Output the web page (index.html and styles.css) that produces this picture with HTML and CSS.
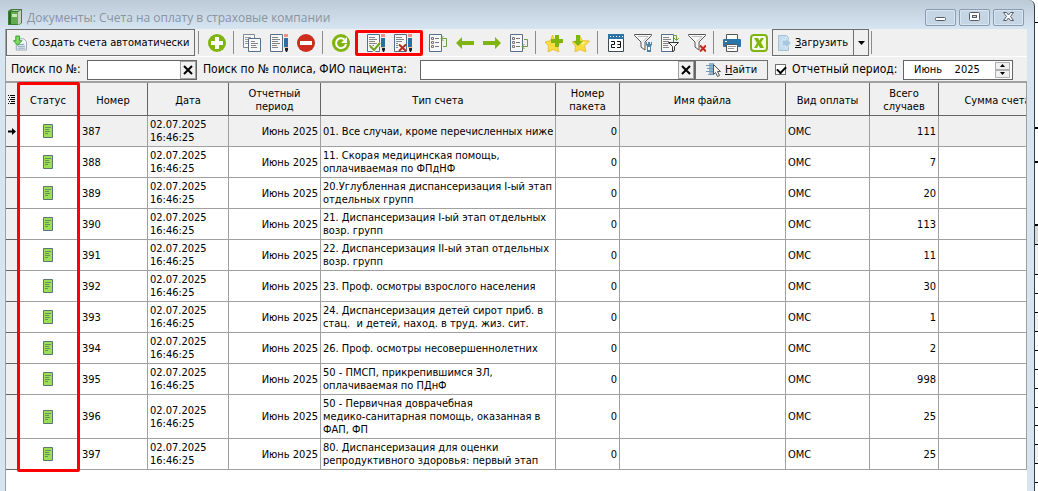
FILE: index.html
```html
<!DOCTYPE html>
<html lang="ru">
<head>
    <meta charset="UTF-8">
    <meta name="viewport" content="width=device-width, initial-scale=1.0">
    <title>Документы: Счета на оплату в страховые компании</title>
    <link rel="stylesheet" href="styles.css">
</head>
<body>
    <svg class="sprite" aria-hidden="true">
        <symbol id="page" viewBox="0 0 10 14">
            <path d="M.5.5h9v13h-9z" fill="#9be052" stroke="#5c7378"/>
            <path d="M2 3.500h6M2 5.500h4M2 7.500h5M2 9.500h3" stroke="#6d8a60"/>
        </symbol>
        <symbol id="sheet" viewBox="0 0 18 18">
            <path d="M.5.5h12v17H.5z" fill="#f8f8f8" stroke="#54708a"/>
            <path d="M2 3.500h6M2 5.500h8M2 7.500h6M2 9.500h8M2 11.500h5M2 13.500h6" stroke="#858585"/>
        </symbol>
        <symbol id="pencil" viewBox="0 0 5 18">
            <path d="M1 0h4v3H1z" fill="#f09084"/>
            <path d="M1 4h4v9H1z" fill="#2b6fa3"/>
            <path d="M1 13h4v1H1z" fill="#e8c48c"/>
            <path d="M2 14h3v2l-1 2H3l-1-2z" fill="#1e1e28"/>
        </symbol>
        <symbol id="funnel" viewBox="0 0 18 18">
            <path d="M.5.5h17v1L11 8v8l-4-3V8L.5 1.500z" fill="#f7f7f7" stroke="#555"/>
            <path d="M4 2.500h10l-5 5" fill="none" stroke="#bbb"/>
        </symbol>
        <symbol id="star" viewBox="0 0 18 18">
            <path d="M7.500 1l2.500 5.500 7.500.5-5 5 1.500 6-6-2.500L3 18l.5-6L0 8l5.500-1.500z" fill="#fbdc3e" stroke="#e5b92b" stroke-width=".8"/>
            <path d="M7.500 3L9 7.500l5 .5-4 3" fill="#fff08c"/>
        </symbol>
        <symbol id="tree" viewBox="0 0 18 18">
            <path d="M.5.5h12v17H.5z" fill="#f8f8f8" stroke="#54708a"/>
            <path d="M2.500 3.500h2v2h-2zM2.500 7.500h2v2h-2zM2.500 11.500h2v2h-2z" fill="none" stroke="#777"/>
            <path d="M6 4.500h4M6 8.500h4M6 12.500h4" stroke="#777"/>
        </symbol>
    </svg>

    <div class="window">
        <header class="titlebar">
            <svg class="book" viewBox="0 0 14 16"><path d="M0 2l3-2h11v14l-3 2H0z" fill="#3c7d35"/><path d="M1 3h9v12H1z" fill="#62ac50"/><path d="M10 3l3-2v13l-3 2z" fill="#c5d4c2"/><path d="M1 3h2v12H1z" fill="#2c6929"/><path d="M4 5h5v3H4z" fill="#c8e6b8"/><path d="M3 2l2-1h7l-2 1z" fill="#a5cf98"/></svg>
            <h1>Документы: Счета на оплату в страховые компании</h1>
            <div class="window-buttons">
                <button aria-label="Свернуть"><svg viewBox="0 0 11 10"><rect x=".5" y="5.500" width="10" height="3" rx="1" fill="#fff" stroke="#525c69"/></svg></button>
                <button aria-label="Развернуть"><svg viewBox="0 0 11 10"><rect x=".5" y=".5" width="10" height="8" rx="1" fill="#fff" stroke="#525c69"/><rect x="3.500" y="3.500" width="4" height="2" fill="#cbd9e8" stroke="#525c69"/></svg></button>
                <button aria-label="Закрыть"><svg viewBox="0 0 11 10"><path d="M.5.5h3l2 2.500 2-2.500h3L7.500 4.500l3 4h-3l-2-2.500-2 2.500h-3l3-4z" fill="#fff" stroke="#525c69"/></svg></button>
            </div>
        </header>

        <main class="content">
            <div class="toolbar">
                <button class="btn create">
                    <svg viewBox="0 0 15 16"><path d="M3.500 3.500h8l3 3v9h-11z" fill="#f3f7fb" stroke="#8ea2b5"/><path d="M5 9.500h7M5 11.500h8M5 13.500h8" stroke="#7b98b3"/><path d="M3 .5h4v5h2.500L5 10.500.5 5.500H3z" fill="#7bdc62" stroke="#3a9a32"/></svg>
                    Создать счета автоматически
                </button>
                <i class="sep"></i>
                <button class="tool" aria-label="Добавить"><svg viewBox="0 0 18 18"><circle cx="9" cy="9" r="9" fill="#80b50f"/><path d="M7 3h4v4h4v4h-4v4H7v-4H3V7h4z" fill="#fff"/></svg></button>
                <i class="sep"></i>
                <button class="tool" aria-label="Копировать"><svg viewBox="0 0 18 18"><path d="M.5.5h11v13H.5z" fill="#f8f8f8" stroke="#7a8a96"/><path d="M2 3.500h6M2 5.500h3M2 7.500h3M2 9.500h3" stroke="#999"/><path d="M5.500 4.500h12v13h-12z" fill="#f8f8f8" stroke="#54708a"/><path d="M8 7.500h4M8 9.500h7M8 11.500h5M8 13.500h6" stroke="#858585"/></svg></button>
                <button class="tool" aria-label="Изменить"><svg viewBox="0 0 18 18"><use href="#sheet" width="18" height="18"/><use href="#pencil" x="13" width="5" height="18"/></svg></button>
                <button class="tool" aria-label="Удалить"><svg viewBox="0 0 18 18"><circle cx="9" cy="9" r="9" fill="#cc2d1c"/><path d="M3 7h12v4H3z" fill="#fff"/></svg></button>
                <i class="sep"></i>
                <button class="tool" aria-label="Обновить"><svg viewBox="0 0 18 18"><circle cx="9" cy="9" r="9" fill="#80b50f"/><path d="M12.500 5.500A5 5 0 1 0 14 10" fill="none" stroke="#fff" stroke-width="2"/><path d="M15 3v6H9z" fill="#fff"/></svg></button>
                <div class="marked-tools">
                    <button class="tool" aria-label="Подтвердить"><svg viewBox="0 0 18 18"><use href="#sheet" width="18" height="18"/><path d="M3 12l4 4 6-7" fill="none" stroke="#f8f8f8" stroke-width="4"/><path d="M3 12l4 4 6-7" fill="none" stroke="#69a61f" stroke-width="2"/><use href="#pencil" x="13" width="5" height="18"/></svg></button>
                    <button class="tool" aria-label="Отклонить"><svg viewBox="0 0 18 18"><use href="#sheet" width="18" height="18"/><path d="M4 9h8v8H4z" fill="#f8f8f8"/><path d="M5 10.500l7 6.500M12 10.500L5 17" stroke="#b52c20" stroke-width="2"/><use href="#pencil" x="13" width="5" height="18"/></svg></button>
                    <i class="mark"></i>
                </div>
                <button class="tool" aria-label="Исключить"><svg viewBox="0 0 18 18"><use href="#tree" width="18" height="18"/><path d="M12 4.500h5.500v8H14M14.500 2L12 4.500 14.500 7" fill="none" stroke="#6c9f3f"/></svg></button>
                <button class="tool" aria-label="Назад"><svg viewBox="0 0 18 18"><path d="M0 9l6-6v4h12v4H6v4z" fill="#80b50f"/></svg></button>
                <button class="tool" aria-label="Вперед"><svg viewBox="0 0 18 18"><path d="M18 9l-6-6v4H0v4h12v4z" fill="#80b50f"/></svg></button>
                <button class="tool" aria-label="Включить"><svg viewBox="0 0 18 18"><use href="#tree" width="18" height="18"/><path d="M14 5.500h3.500v7H12M14.500 10L12 12.500l2.500 2.500" fill="none" stroke="#6c9f3f"/></svg></button>
                <i class="sep"></i>
                <button class="tool" aria-label="Добавить в избранное"><svg viewBox="0 0 18 18"><use href="#star" width="18" height="18"/><path d="M10 1h4v4h4v4h-4v4h-4V9H6V5h4z" fill="#80b50f"/></svg></button>
                <button class="tool" aria-label="Загрузить избранное"><svg viewBox="0 0 18 18"><use href="#star" width="18" height="18"/><path d="M4 1h4v6h3l-5 5-5-5h3z" fill="#80b50f"/></svg></button>
                <i class="sep"></i>
                <button class="tool" aria-label="Календарь"><svg viewBox="0 0 18 18"><path d="M1.500.5h15v17h-15z" fill="#fff" stroke="#3c4a54"/><path d="M1 0h16v5H1z" fill="#2b74a8"/><path d="M3 2h1v1H3zM6 2h1v1H6zM9 2h1v1H9zM12 2h1v1h-1zM15 2h1v1h-1z" fill="#fff"/><path d="M4 7.500h3.500v3h-3v3H8M10 7.500h3.500v6H10M10.500 10.500H14" fill="none" stroke="#111"/></svg></button>
                <button class="tool" aria-label="Настройка фильтра"><svg viewBox="0 0 18 18"><use href="#funnel" width="18" height="18"/><path d="M12 8v3l1 1v6h4v-6l1-1V8h-1v2h-1V8h-2v2h-1V8z" fill="#4b83ab"/><path d="M14 13h2v3h-2z" fill="#fff"/></svg></button>
                <button class="tool" aria-label="Фильтр документов"><svg viewBox="0 0 18 18"><use href="#sheet" width="18" height="18"/><path d="M12 1.500h3.500V6M13 4l2.500 2.500L18 4" fill="none" stroke="#6c9f3f"/><path d="M7.500 8.500h10l-4 4v4l-2 1v-5z" fill="#f8f8f8" stroke="#333"/></svg></button>
                <button class="tool" aria-label="Сбросить фильтр"><svg viewBox="0 0 18 18"><use href="#funnel" width="18" height="18"/><path d="M12 11.500l6 6M18 11.500l-6 6" stroke="#c02a1f" stroke-width="2"/></svg></button>
                <i class="sep"></i>
                <button class="tool" aria-label="Печать"><svg viewBox="0 0 18 18"><path d="M3.500.5h11v6h-11z" fill="#fff" stroke="#555"/><rect y="5" width="18" height="8" rx="1" fill="#2b74a8"/><path d="M2 7h2v1H2z" fill="#fff"/><path d="M3.500 10.500h11v7h-11z" fill="#fff" stroke="#555"/><path d="M5 12.500h8M5 14.500h6" stroke="#999"/></svg></button>
                <button class="tool" aria-label="Экспорт в Excel"><svg viewBox="0 0 18 18"><rect x="1" y="1" width="16" height="16" rx="3" fill="#f4f9e8" stroke="#80b50f" stroke-width="2"/><path d="M4 4h4l1.500 2.500L11 4h3l-3 4.500 3 5.500h-4l-1.500-3L7 14H4l3-5z" fill="#80b50f"/></svg></button>
                <div class="split">
                    <button class="btn load"><svg viewBox="0 0 13 16"><path d="M.5.5h8l2 2v13H.5z" fill="#c5dcec" stroke="#a5c3d8"/><path d="M4 5h4V2l5 6-5 6v-3H4z" fill="#a6c8e0" stroke="#deebf5"/></svg><span><u>З</u>агрузить</span></button>
                    <button class="btn drop" aria-label="Варианты загрузки"><svg viewBox="0 0 7 4"><path d="M0 0h7L3.500 4z"/></svg></button>
                </div>
                <i class="sep end"></i>
            </div>

            <form class="search">
                <label for="num">Поиск по №:</label>
                <div class="field num-field">
                    <input id="num" type="text">
                    <button type="button" class="clear" aria-label="Очистить"><svg viewBox="0 0 10 10"><path d="M1 1l8 8M9 1L1 9" stroke="#000" stroke-width="2"/></svg></button>
                </div>
                <label for="patient" class="patient-label">Поиск по № полиса, ФИО пациента:</label>
                <div class="field patient-field">
                    <input id="patient" type="text">
                    <button type="button" class="clear" aria-label="Очистить"><svg viewBox="0 0 10 10"><path d="M1 1l8 8M9 1L1 9" stroke="#000" stroke-width="2"/></svg></button>
                </div>
                <button type="button" class="btn find"><svg viewBox="0 0 15 15"><path d="M3 1h5v12H3z" fill="#8fb4cd"/><path d="M0 3.500h9M1 6.500h7M0 9.500h7M2 12.500h5" stroke="#6c9cbb"/><path d="M7.500 2.500v10l2-2 2 4 2-1-2-4h3z" fill="#f4f4f4" stroke="#555"/></svg><span><u>Н</u>айти</span></button>
                <input id="byPeriod" class="check" type="checkbox" checked>
                <label for="byPeriod" class="period-label">Отчетный период:</label>
                <div class="field period">
                    <input type="text" value="Июнь    2025" aria-label="Отчетный период">
                    <div class="spin">
                        <button type="button" aria-label="Следующий"><svg viewBox="0 0 5 3"><path d="M0 3h5L2.500 0z"/></svg></button>
                        <button type="button" aria-label="Предыдущий"><svg viewBox="0 0 5 3"><path d="M0 0h5L2.500 3z"/></svg></button>
                    </div>
                </div>
            </form>

            <div class="grid">
                <table>
                    <colgroup>
                        <col class="c-mark"><col class="c-status"><col class="c-num"><col class="c-date"><col class="c-period"><col class="c-type"><col class="c-pack"><col><col class="c-pay"><col class="c-total"><col class="c-sum">
                    </colgroup>
                    <thead>
                        <tr>
                            <th><svg class="menu" viewBox="0 0 7 10"><path d="M0 .5h1M2 .5h5M1 2.500h1M3 2.500h4M0 4.500h1M2 4.500h5M1 6.500h1M3 6.500h4M0 8.500h1M2 8.500h5" stroke="#000"/></svg></th>
                            <th>Статус</th><th>Номер</th><th>Дата</th><th>Отчетный<br>период</th><th>Тип счета</th><th>Номер<br>пакета</th><th>Имя файла</th><th>Вид оплаты</th><th>Всего<br>случаев</th><th>Сумма счета</th>
                        </tr>
                    </thead>
                    <tbody>
                        <tr class="current"><td><svg class="arrow" viewBox="0 0 8 7"><path d="M0 2.500h4V0l4 3.500L4 7V4.500H0z"/></svg></td><td><svg class="page"><use href="#page"/></svg></td><td>387</td><td>02.07.2025<br>16:46:25</td><td>Июнь 2025</td><td>01. Все случаи, кроме перечисленных ниже</td><td>0</td><td></td><td>ОМС</td><td>111</td><td></td></tr>
                        <tr><td></td><td><svg class="page"><use href="#page"/></svg></td><td>388</td><td>02.07.2025<br>16:46:25</td><td>Июнь 2025</td><td>11. Скорая медицинская помощь,<br>оплачиваемая по ФПдНФ</td><td>0</td><td></td><td>ОМС</td><td>7</td><td></td></tr>
                        <tr><td></td><td><svg class="page"><use href="#page"/></svg></td><td>389</td><td>02.07.2025<br>16:46:25</td><td>Июнь 2025</td><td>20.Углубленная диспансеризация I-ый этап<br>отдельных групп</td><td>0</td><td></td><td>ОМС</td><td>20</td><td></td></tr>
                        <tr><td></td><td><svg class="page"><use href="#page"/></svg></td><td>390</td><td>02.07.2025<br>16:46:25</td><td>Июнь 2025</td><td>21. Диспансеризация I-ый этап отдельных<br>возр. групп</td><td>0</td><td></td><td>ОМС</td><td>113</td><td></td></tr>
                        <tr><td></td><td><svg class="page"><use href="#page"/></svg></td><td>391</td><td>02.07.2025<br>16:46:25</td><td>Июнь 2025</td><td>22. Диспансеризация II-ый этап отдельных<br>возр. групп</td><td>0</td><td></td><td>ОМС</td><td>11</td><td></td></tr>
                        <tr><td></td><td><svg class="page"><use href="#page"/></svg></td><td>392</td><td>02.07.2025<br>16:46:25</td><td>Июнь 2025</td><td>23. Проф. осмотры взрослого населения</td><td>0</td><td></td><td>ОМС</td><td>30</td><td></td></tr>
                        <tr><td></td><td><svg class="page"><use href="#page"/></svg></td><td>393</td><td>02.07.2025<br>16:46:25</td><td>Июнь 2025</td><td>24. Диспансеризация детей сирот приб. в<br>стац.&nbsp; и детей, наход. в труд. жиз. сит.</td><td>0</td><td></td><td>ОМС</td><td>1</td><td></td></tr>
                        <tr><td></td><td><svg class="page"><use href="#page"/></svg></td><td>394</td><td>02.07.2025<br>16:46:25</td><td>Июнь 2025</td><td>26. Проф. осмотры несовершеннолетних</td><td>0</td><td></td><td>ОМС</td><td>2</td><td></td></tr>
                        <tr><td></td><td><svg class="page"><use href="#page"/></svg></td><td>395</td><td>02.07.2025<br>16:46:25</td><td>Июнь 2025</td><td>50 - ПМСП, прикрепившимся ЗЛ,<br>оплачиваемая по ПДнФ</td><td>0</td><td></td><td>ОМС</td><td>998</td><td></td></tr>
                        <tr><td></td><td><svg class="page"><use href="#page"/></svg></td><td>396</td><td>02.07.2025<br>16:46:25</td><td>Июнь 2025</td><td>50 - Первичная доврачебная<br>медико-санитарная помощь, оказанная в<br>ФАП, ФП</td><td>0</td><td></td><td>ОМС</td><td>25</td><td></td></tr>
                        <tr><td></td><td><svg class="page"><use href="#page"/></svg></td><td>397</td><td>02.07.2025<br>16:46:25</td><td>Июнь 2025</td><td>80. Диспансеризация для оценки<br>репродуктивного здоровья: первый этап</td><td>0</td><td></td><td>ОМС</td><td>25</td><td></td></tr>
                    </tbody>
                </table>
                <i class="mark"></i>
            </div>
        </main>
    </div>

    <svg class="behind" aria-hidden="true">
        <path d="M0 226h3v18H0z" fill="#d9d9d9"/>
        <path d="M0 245h3v29H0zM0 313h3v18H0zM0 445h3v18H0z" fill="#f0f0f0"/>
        <path d="M0 22.500h3M0 244.500h3M0 274.500h3M0 293.500h3M0 312.500h3M0 331.500h3M0 350.500h3M0 369.500h3M0 388.500h3M0 407.500h3M0 425.500h3M0 444.500h3M0 463.500h3M0 482.500h3" stroke="#000"/>
        <path d="M0 128h3M0 162h3M0 225h3" stroke="#000" stroke-width="2"/>
    </svg>
</body>
</html>
```
FILE: styles.css
```css
* {
    box-sizing: border-box;
}
body {
    margin: 0;
    min-height: 100vh;
    display: flex;
    background: #fff;
    font: 11px/13px "DejaVu Sans Condensed", "DejaVu Sans", sans-serif;
    color: #000;
}
button, input {
    font: inherit;
    color: inherit;
    margin: 0;
    padding: 0;
}
button {
    background: #f0f0f0;
    border: none;
}
.sprite {
    position: absolute;
    width: 0;
    height: 0;
}

/* window frame */
.window {
    flex: 1;
    min-width: 0;
    display: flex;
    flex-direction: column;
    padding: 0 7px 0 5px;
    border-right: 1px solid #3a3f45;
    border-top-right-radius: 6px;
    background: linear-gradient(#bccad8, #d7e4f1 29px);
}
.titlebar {
    height: 29px;
    display: flex;
    align-items: center;
    gap: 5px;
    padding: 5px 3px 0 3px;
}
.book {
    width: 14px;
    height: 16px;
}
.titlebar h1 {
    flex: 1;
    margin: 0;
    font-family: "Open Sans", "Noto Sans", sans-serif;
    font-size: 12px;
    font-weight: normal;
    white-space: nowrap;
    color: #8b949e;
}
.window-buttons {
    display: flex;
    gap: 3px;
}
.window-buttons button {
    width: 31px;
    height: 17px;
    display: flex;
    align-items: center;
    justify-content: center;
    background: #c6d5e4;
    border: 1px solid #8a9bb0;
    border-radius: 2px;
    box-shadow: inset 0 0 0 1px #d9e5f0;
}
.window-buttons svg {
    width: 11px;
    height: 10px;
}
.content {
    flex: 1;
    border-left: 1px solid #a0a0a0;
    background: #fff;
}

/* toolbar */
.toolbar {
    height: 27px;
    display: flex;
    align-items: center;
    background: #f0f0f0;
}
.btn {
    display: flex;
    align-items: center;
    border: 1px solid #6e6e6e;
    white-space: nowrap;
}
.create {
    width: 189px;
    height: 27px;
    gap: 5px;
    padding-left: 6px;
}
.create svg {
    width: 14px;
    height: 16px;
}
.tool {
    width: 27px;
    height: 26px;
    display: flex;
    align-items: center;
    justify-content: center;
}
.tool svg {
    width: 18px;
    height: 18px;
}
.sep {
    width: 1px;
    height: 23px;
    margin: 0 4px 0 3px;
    background: #8c8c8c;
}
.end {
    margin-left: 2px;
}
.marked-tools {
    position: relative;
    display: flex;
    margin: 0 8px;
}
.mark {
    position: absolute;
    border: 3px solid #f00;
    border-radius: 2px;
    pointer-events: none;
}
.marked-tools .mark {
    top: 0;
    bottom: 0;
    left: -7px;
    right: -7px;
}
.split {
    display: flex;
}
.load {
    width: 82px;
    height: 27px;
    gap: 4px;
    padding-left: 5px;
}
.load svg {
    width: 13px;
    height: 16px;
}
.drop {
    width: 15px;
    height: 27px;
    border-left: none;
    justify-content: center;
}
.drop svg {
    width: 7px;
    height: 4px;
}

/* search row */
.search {
    height: 27px;
    display: flex;
    align-items: center;
    padding: 1px 14px 0 5px;
    background: #f0f0f0;
    border-top: 1px solid #fff;
    border-bottom: 2px solid #a0a0a0;
    font-size: 12px;
}
.search label {
    white-space: nowrap;
}
.search label:first-child {
    width: 76px;
}
.field {
    height: 20px;
    display: flex;
    background: #fff;
    border: 1px solid #646464;
}
.field input {
    flex: 1;
    min-width: 0;
    border: none;
    outline: none;
    background: none;
}
.num-field {
    width: 110px;
}
.search .patient-label {
    width: 223px;
    padding-left: 6px;
}
.search .patient-field {
    flex: 1;
}
.clear {
    width: 16px;
    display: flex;
    align-items: center;
    justify-content: center;
    border: 1px solid #a0a0a0;
}
.clear svg {
    width: 10px;
    height: 10px;
}
.find {
    width: 73px;
    height: 20px;
    gap: 4px;
    padding-left: 10px;
    font-size: 11px;
}
.find svg {
    width: 15px;
    height: 15px;
}
.check {
    appearance: none;
    width: 11px;
    height: 11px;
    margin: 0 6px 0 7px;
    border: 1px solid #707070;
    background: #fff;
}
.check:checked::before {
    content: "";
    display: block;
    width: 7px;
    height: 4px;
    margin: 1px;
    border-left: 2px solid #000;
    border-bottom: 2px solid #000;
    transform: rotate(-45deg);
}
.search .period-label {
    width: 111px;
}
.period {
    width: 110px;
    padding: 1px 2px 1px 10px;
    font-size: 11px;
}
.spin {
    width: 15px;
    display: flex;
    flex-direction: column;
}
.spin button {
    flex: 1;
    display: flex;
    align-items: center;
    justify-content: center;
    border: 1px solid #b0b0b0;
}
.spin svg {
    width: 5px;
    height: 3px;
}

/* invoices */
.grid {
    position: relative;
    overflow-x: clip;
    border-right: 1px solid #a0a0a0;
}
.grid .mark {
    top: -1px;
    bottom: -2px;
    left: 11px;
    width: 63px;
}
table {
    width: calc(100% + 31px);
    table-layout: fixed;
    border-collapse: separate;
    border-spacing: 0;
}
th, td {
    height: 31px;
    padding: 2px;
    border-right: 1px solid #a0a0a0;
    border-bottom: 1px solid #a0a0a0;
    white-space: nowrap;
}
th {
    height: 33px;
    padding-top: 4px;
    font-weight: normal;
    background: #f0f0f0;
    border-color: #646464;
}
td:first-child {
    background: #f0f0f0;
    border-color: #646464;
}
.current td {
    background: #f0f0f0;
}
.current td:nth-child(2) {
    background: #fff;
}
td:nth-child(-n+2) {
    text-align: center;
}
td:nth-child(5), td:nth-child(7), td:nth-child(10) {
    text-align: right;
}
td svg, th svg {
    display: block;
    margin: 0 auto;
}
.page {
    width: 10px;
    height: 14px;
}
.arrow {
    width: 8px;
    height: 7px;
}
.menu {
    width: 7px;
    height: 10px;
}
.c-mark { width: 12px; }
.c-status { width: 61px; }
.c-num { width: 69px; }
.c-date { width: 81px; }
.c-period { width: 92px; }
.c-type { width: 235px; }
.c-pack { width: 64px; }
.c-pay { width: 84px; }
.c-total { width: 69px; }
.c-sum { width: 118px; }
td:nth-child(3) {
    padding-left: 3px;
}

/* sheet visible behind the window */
.behind {
    flex: none;
    width: 3px;
    height: 491px;
}
```
